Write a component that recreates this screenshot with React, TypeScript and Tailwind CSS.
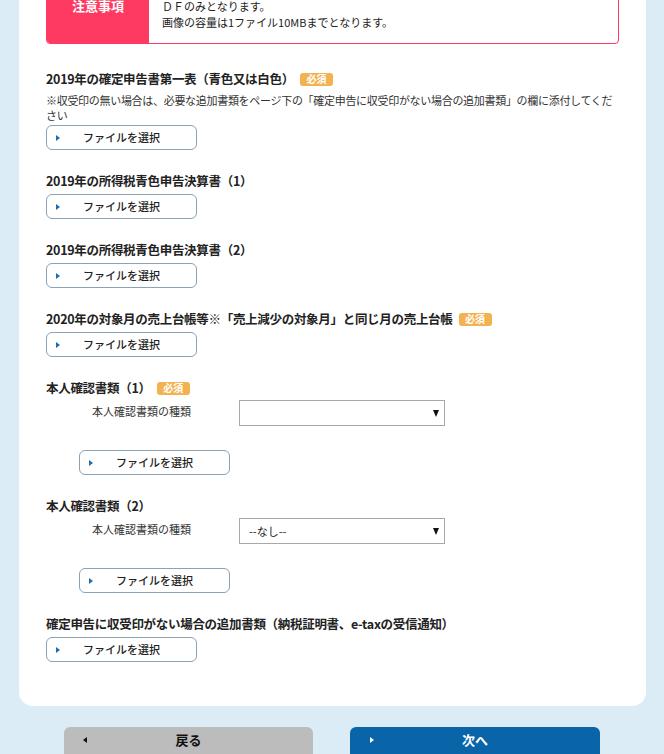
import { ReactNode } from 'react';

// 小さい三角アイコン
const Tri = ({ dir = 'right', color = '#1f6cae' }: { dir?: 'right' | 'left'; color?: string }) => (
  <svg width="4" height="6" viewBox="0 0 4 6" className="block">
    {dir === 'right' ? (
      <polygon points="0,0 4,3 0,6" fill={color} />
    ) : (
      <polygon points="4,0 0,3 4,6" fill={color} />
    )}
  </svg>
);

const Badge = () => (
  <span className="ml-[6px] inline-flex h-[13px] w-[33px] items-center justify-center rounded-[3px] bg-[#f2b24f] align-[1px] text-[10px] leading-none tracking-normal font-bold text-white">
    必須
  </span>
);

const FileButton = ({ indent = false, className = '' }: { indent?: boolean; className?: string }) => (
  <button
    type="button"
    className={`grid h-[25px] w-[151px] grid-cols-[1fr_auto_1fr] items-center rounded-[6px] border border-[#8aa2b4] bg-white text-[11px] font-medium text-[#222] ${
      indent ? 'ml-[33px] mt-[24px]' : className || 'mt-[3px]'
    }`}
  >
    <span className="pl-[9px]">
      <Tri />
    </span>
    <span>ファイルを選択</span>
    <span />
  </button>
);

const Title = ({ children, required }: { children: ReactNode; required?: boolean }) => (
  <h3 className="text-[12.5px] leading-[20px] tracking-[-0.3px] font-bold text-[#222]">
    {children}
    {required && <Badge />}
  </h3>
);

const SelectRow = ({ value }: { value: string }) => (
  <div className="mt-[2px] flex items-start pl-[46px]">
    <span className="w-[147px] pt-[3px] text-[11px] leading-[16px] text-[#333]">本人確認書類の種類</span>
    <div className="flex h-[26px] w-[206px] items-center justify-between border border-[#a8a8a8] bg-white pr-[5px] pl-[9px] text-[11px] text-[#222]">
      <span>{value}</span>
      <svg width="6" height="7" viewBox="0 0 6 7">
        <polygon points="0,0 6,0 3,7" fill="#111" />
      </svg>
    </div>
  </div>
);

const App = () => {
  return (
    <div className="min-h-screen overflow-hidden bg-[#dcecf6] font-['Noto_Sans_CJK_JP','Noto_Sans',sans-serif] text-[#222]">
      <div className="-mt-[60px] ml-[19px] w-[627px]">
        <div className="rounded-[14px] bg-white px-[27px] pt-[28px] pb-[44px]">
          {/* 注意事項 */}
          <div className="flex overflow-hidden rounded-[4px] border border-[#ff3a62]">
            <div className="flex w-[102px] items-center justify-center bg-[#ff3a62] text-[13px] font-bold text-white">
              注意事項
            </div>
            <div className="py-[13px] pl-[13px] text-[11px] leading-[16px] text-[#222]">
              <p>アップロードできるファイルの形式はＪＰＥＧ、ＰＮＧ、Ｐ</p>
              <p>ＤＦのみとなります。</p>
              <p>画像の容量は1ファイル10MBまでとなります。</p>
            </div>
          </div>

          <div className="mt-[25px] space-y-[21px]">
            <section>
              <Title required>2019年の確定申告書第一表（青色又は白色）</Title>
              <p className="mt-[4px] text-[11px] leading-[15px] tracking-[-0.3px] text-[#333]">
                ※収受印の無い場合は、必要な追加書類をページ下の「確定申告に収受印がない場合の追加書類」の欄に添付してくだ
                <br />
                さい
              </p>
              <FileButton className="mt-[2px]" />
            </section>

            <section>
              <Title>2019年の所得税青色申告決算書（1）</Title>
              <FileButton />
            </section>

            <section>
              <Title>2019年の所得税青色申告決算書（2）</Title>
              <FileButton />
            </section>

            <section>
              <Title required>2020年の対象月の売上台帳等※「売上減少の対象月」と同じ月の売上台帳</Title>
              <FileButton />
            </section>

            <section>
              <Title required>本人確認書類（1）</Title>
              <SelectRow value="" />
              <FileButton indent />
            </section>

            <section>
              <Title>本人確認書類（2）</Title>
              <SelectRow value="--なし--" />
              <FileButton indent />
            </section>

            <section>
              <Title>確定申告に収受印がない場合の追加書類（納税証明書、e-taxの受信通知）</Title>
              <FileButton />
            </section>
          </div>
        </div>
      </div>

      {/* 戻る / 次へ */}
      <div className="mt-[21px] flex justify-center gap-[37px]">
        <button
          type="button"
          className="grid h-[44px] w-[249px] grid-cols-[1fr_auto_1fr] items-start rounded-t-[6px] bg-[#bcbcbc] pt-[5px] text-[13px] leading-[16px] font-bold text-[#111]"
        >
          <span className="pt-[5px] pl-[19px]">
            <Tri dir="left" color="#111" />
          </span>
          <span>戻る</span>
          <span />
        </button>
        <button
          type="button"
          className="grid h-[44px] w-[250px] grid-cols-[1fr_auto_1fr] items-start rounded-t-[6px] bg-[#0964a8] pt-[5px] text-[13px] leading-[16px] font-bold text-white"
        >
          <span className="pt-[5px] pl-[20px]">
            <Tri color="#fff" />
          </span>
          <span>次へ</span>
          <span />
        </button>
      </div>
    </div>
  );
};

export default App;
